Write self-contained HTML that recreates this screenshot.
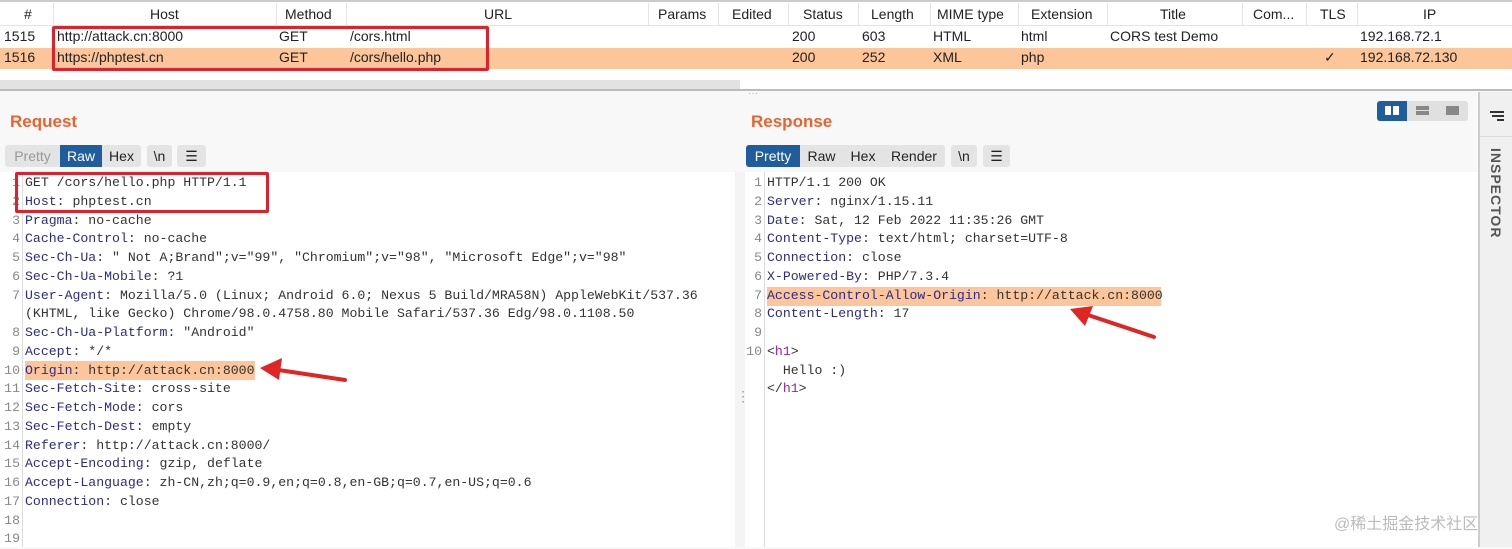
<!DOCTYPE html>
<html><head><meta charset="utf-8"><style>
*{margin:0;padding:0;box-sizing:border-box}
body{width:1512px;height:547px;overflow:hidden;background:#f8f8f8;font-family:"Liberation Sans",sans-serif;position:relative;color:#222}
.abs{position:absolute}
.tbl{left:0;top:0;width:1512px;height:91px;background:#fff;border-top:2px solid #ccc;border-bottom:2px solid #bbb}
.hd{top:3px;height:23px;width:1512px;border-bottom:1px solid #e4e4e4;background:#fff}
.c{position:absolute;font-size:14px;white-space:nowrap}
.sep{position:absolute;top:3px;height:23px;width:1px;background:#e4e4e4}
.code{font-family:"Liberation Mono","Noto Sans CJK SC",monospace;font-size:13.2px;color:#333}
.code>div{height:18.75px;line-height:18.75px;white-space:pre;position:relative}
.ln{position:absolute;left:0;width:20px;text-align:right;color:#888}
.t{position:absolute;left:25px}
.k{color:#2b2b8c}
.btn{position:absolute;top:145px;height:22px;font-size:14px;line-height:22px;text-align:center;background:#e4e4e4;color:#222}
.ttl{font-size:17px;font-weight:bold;color:#e8642c}
</style></head><body>
<div class="abs tbl"></div>
<div class="abs hd"></div>
<div class="sep" style="left:53px"></div><div class="sep" style="left:276px"></div><div class="sep" style="left:346px"></div><div class="sep" style="left:648px"></div><div class="sep" style="left:718px"></div><div class="sep" style="left:788px"></div><div class="sep" style="left:858px"></div><div class="sep" style="left:930px"></div><div class="sep" style="left:1018px"></div><div class="sep" style="left:1107px"></div><div class="sep" style="left:1242px"></div><div class="sep" style="left:1306px"></div><div class="sep" style="left:1357px"></div>
<div class="c" style="left:24px;top:6px">#</div>
<div class="c" style="left:150px;top:6px">Host</div>
<div class="c" style="left:285px;top:6px">Method</div>
<div class="c" style="left:484px;top:6px">URL</div>
<div class="c" style="left:658px;top:6px">Params</div>
<div class="c" style="left:732px;top:6px">Edited</div>
<div class="c" style="left:803px;top:6px">Status</div>
<div class="c" style="left:871px;top:6px">Length</div>
<div class="c" style="left:937px;top:6px">MIME type</div>
<div class="c" style="left:1031px;top:6px">Extension</div>
<div class="c" style="left:1160px;top:6px">Title</div>
<div class="c" style="left:1253px;top:6px">Com...</div>
<div class="c" style="left:1320px;top:6px">TLS</div>
<div class="c" style="left:1423px;top:6px">IP</div>

<div class="c" style="left:4px;top:28px">1515</div>
<div class="c" style="left:57px;top:28px">http://attack.cn:8000</div>
<div class="c" style="left:279px;top:28px">GET</div>
<div class="c" style="left:350px;top:28px">/cors.html</div>
<div class="c" style="left:792px;top:28px">200</div>
<div class="c" style="left:862px;top:28px">603</div>
<div class="c" style="left:933px;top:28px">HTML</div>
<div class="c" style="left:1021px;top:28px">html</div>
<div class="c" style="left:1110px;top:28px">CORS test Demo</div>
<div class="c" style="left:1360px;top:28px">192.168.72.1</div>

<div class="abs" style="left:0;top:48px;width:1512px;height:21px;background:#fdc59a"></div>
<div class="c" style="left:4px;top:49px">1516</div>
<div class="c" style="left:57px;top:49px">https://phptest.cn</div>
<div class="c" style="left:279px;top:49px">GET</div>
<div class="c" style="left:350px;top:49px">/cors/hello.php</div>
<div class="c" style="left:792px;top:49px">200</div>
<div class="c" style="left:862px;top:49px">252</div>
<div class="c" style="left:933px;top:49px">XML</div>
<div class="c" style="left:1021px;top:49px">php</div>
<div class="c" style="left:1324px;top:49px">✓</div>
<div class="c" style="left:1360px;top:49px">192.168.72.130</div>
<div class="abs" style="left:0;top:80px;width:740px;height:9px;background:#e2e2e2"></div>
<div class="abs" style="left:52px;top:26px;width:437px;height:45px;border:3px solid #e0202a;border-radius:2px"></div>

<div class="abs ttl" style="left:10px;top:112px">Request</div>
<div class="abs ttl" style="left:751px;top:112px">Response</div>
<div class="btn" style="left:5px;width:55px;color:#999;border-radius:3px 0 0 3px">Pretty</div>
<div class="btn" style="left:60px;width:42px;background:#1f5d9c;color:#fff">Raw</div>
<div class="btn" style="left:102px;width:39px;border-radius:0 3px 3px 0">Hex</div>
<div class="btn" style="left:147px;width:25px;border-radius:3px">\n</div>
<div class="btn" style="left:177px;width:29px;border-radius:3px">☰</div>
<div class="btn" style="left:746px;width:54px;background:#1f5d9c;color:#fff;border-radius:3px 0 0 3px">Pretty</div>
<div class="btn" style="left:800px;width:43px">Raw</div>
<div class="btn" style="left:843px;width:40px">Hex</div>
<div class="btn" style="left:883px;width:62px;border-radius:0 3px 3px 0">Render</div>
<div class="btn" style="left:951px;width:26px;border-radius:3px">\n</div>
<div class="btn" style="left:983px;width:27px;border-radius:3px">☰</div>

<div class="abs" style="left:1377px;top:101px;width:91px;height:20px;background:#e0e0e0;border-radius:3px"></div>
<div class="abs" style="left:1377px;top:101px;width:30px;height:20px;background:#1f5d9c;border-radius:3px 0 0 3px"></div>
<div class="abs" style="left:1385px;top:106px;width:6px;height:9px;background:#fff"></div><div class="abs" style="left:1393px;top:106px;width:6px;height:9px;background:#fff"></div>
<div class="abs" style="left:1416px;top:106px;width:13px;height:4px;background:#888"></div><div class="abs" style="left:1416px;top:111px;width:13px;height:4px;background:#888"></div>
<div class="abs" style="left:1446px;top:106px;width:13px;height:9px;background:#888"></div>

<div class="abs" style="left:1478px;top:92px;width:34px;height:455px;background:#f0f0f0;border-left:2px solid #ccc"></div>
<div class="abs" style="left:1480px;top:136px;width:32px;height:1px;background:#ddd"></div>
<div class="abs" style="left:1490px;top:111px;width:14px;height:2px;background:#333"></div>
<div class="abs" style="left:1492px;top:115px;width:12px;height:2px;background:#333"></div>
<div class="abs" style="left:1497px;top:119px;width:7px;height:2px;background:#333"></div>
<div class="abs" style="left:1486px;top:148px;width:20px;height:92px;"><div style="transform:rotate(90deg);transform-origin:0 0;position:absolute;left:18px;top:0;font-size:14px;font-weight:bold;color:#555;letter-spacing:1px;white-space:nowrap">INSPECTOR</div></div>

<div class="abs" style="left:0;top:172px;width:735px;height:375px;background:#fff"></div>
<div class="abs" style="left:22px;top:172px;width:1px;height:375px;background:#ddd"></div>
<div class="abs" style="left:745px;top:172px;width:733px;height:375px;background:#fff"></div>
<div class="abs" style="left:764px;top:172px;width:1px;height:375px;background:#ddd"></div>
<div class="abs" style="left:735px;top:172px;width:10px;height:375px;background:#f4f4f4"></div>
<div class="abs" style="left:736px;top:388px;color:#999;font-size:14px">⋮</div>
<div class="abs" style="left:748px;top:88px;color:#aaa;font-size:10px">···</div>

<div class="abs" style="left:25px;top:361px;width:230px;height:19px;background:#fdc59a"></div>
<div class="abs" style="left:767px;top:287px;width:394px;height:19px;background:#fdc59a"></div>

<div class="abs code" style="left:0;top:174px;width:735px">
<div><span class="ln">1</span><span class="t">GET /cors/hello.php HTTP/1.1</span></div>
<div><span class="ln">2</span><span class="t"><span class="k">Host</span>: phptest.cn</span></div>
<div><span class="ln">3</span><span class="t"><span class="k">Pragma</span>: no-cache</span></div>
<div><span class="ln">4</span><span class="t"><span class="k">Cache-Control</span>: no-cache</span></div>
<div><span class="ln">5</span><span class="t"><span class="k">Sec-Ch-Ua</span>: " Not A;Brand";v="99", "Chromium";v="98", "Microsoft Edge";v="98"</span></div>
<div><span class="ln">6</span><span class="t"><span class="k">Sec-Ch-Ua-Mobile</span>: ?1</span></div>
<div><span class="ln">7</span><span class="t"><span class="k">User-Agent</span>: Mozilla/5.0 (Linux; Android 6.0; Nexus 5 Build/MRA58N) AppleWebKit/537.36</span></div>
<div><span class="t">(KHTML, like Gecko) Chrome/98.0.4758.80 Mobile Safari/537.36 Edg/98.0.1108.50</span></div>
<div><span class="ln">8</span><span class="t"><span class="k">Sec-Ch-Ua-Platform</span>: "Android"</span></div>
<div><span class="ln">9</span><span class="t"><span class="k">Accept</span>: */*</span></div>
<div><span class="ln">10</span><span class="t"><span class="k">Origin</span>: http://attack.cn:8000</span></div>
<div><span class="ln">11</span><span class="t"><span class="k">Sec-Fetch-Site</span>: cross-site</span></div>
<div><span class="ln">12</span><span class="t"><span class="k">Sec-Fetch-Mode</span>: cors</span></div>
<div><span class="ln">13</span><span class="t"><span class="k">Sec-Fetch-Dest</span>: empty</span></div>
<div><span class="ln">14</span><span class="t"><span class="k">Referer</span>: http://attack.cn:8000/</span></div>
<div><span class="ln">15</span><span class="t"><span class="k">Accept-Encoding</span>: gzip, deflate</span></div>
<div><span class="ln">16</span><span class="t"><span class="k">Accept-Language</span>: zh-CN,zh;q=0.9,en;q=0.8,en-GB;q=0.7,en-US;q=0.6</span></div>
<div><span class="ln">17</span><span class="t"><span class="k">Connection</span>: close</span></div>
<div><span class="ln">18</span></div>
<div><span class="ln">19</span></div>
</div>

<div class="abs code" style="left:742px;top:174px;width:735px">
<div><span class="ln">1</span><span class="t">HTTP/1.1 200 OK</span></div>
<div><span class="ln">2</span><span class="t"><span class="k">Server</span>: nginx/1.15.11</span></div>
<div><span class="ln">3</span><span class="t"><span class="k">Date</span>: Sat, 12 Feb 2022 11:35:26 GMT</span></div>
<div><span class="ln">4</span><span class="t"><span class="k">Content-Type</span>: text/html; charset=UTF-8</span></div>
<div><span class="ln">5</span><span class="t"><span class="k">Connection</span>: close</span></div>
<div><span class="ln">6</span><span class="t"><span class="k">X-Powered-By</span>: PHP/7.3.4</span></div>
<div><span class="ln">7</span><span class="t"><span class="k">Access-Control-Allow-Origin</span>: http://attack.cn:8000</span></div>
<div><span class="ln">8</span><span class="t"><span class="k">Content-Length</span>: 17</span></div>
<div><span class="ln">9</span></div>
<div><span class="ln">10</span><span class="t">&lt;<span style="color:#a020a0">h1</span>&gt;</span></div>
<div><span class="t">  Hello :)</span></div>
<div><span class="t">&lt;/<span style="color:#a020a0">h1</span>&gt;</span></div>
</div>

<div class="abs" style="left:15px;top:172px;width:254px;height:41px;border:3px solid #e0202a;border-radius:2px"></div>

<svg class="abs" style="left:0;top:0" width="1512" height="547">
<line x1="345" y1="380" x2="272" y2="369" stroke="#e02525" stroke-width="4" stroke-linecap="round"/>
<polygon points="260,368 282,358 279,380" fill="#e02525"/>
<line x1="1154" y1="337" x2="1082" y2="313" stroke="#e02525" stroke-width="4" stroke-linecap="round"/>
<polygon points="1070,309 1093,306 1085,326" fill="#e02525"/>
</svg>

<div class="abs" style="left:1334px;top:510px;font-size:16px;color:#bbb;font-family:'Liberation Sans','Noto Sans CJK SC',sans-serif">@稀土掘金技术社区</div>
</body></html>
